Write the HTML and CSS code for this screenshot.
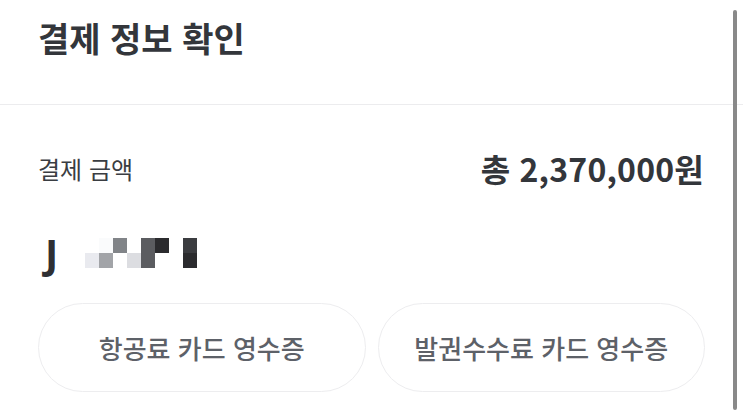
FILE: index.html
```html
<!DOCTYPE html>
<html lang="ko">
<head>
<meta charset="utf-8">
<title>결제 정보 확인</title>
<link rel="stylesheet" href="styles.css">
</head>
<body>
<div class="page">
  <header class="header">
    <h1 class="title">결제 정보 확인</h1>
  </header>
  <section class="content">
    <div class="amount-row">
      <span class="label">결제 금액</span>
      <span class="amount">총 2,370,000원</span>
    </div>
    <div class="name-row">
      <span class="initial">J</span>
      <span class="mosaic">
        <span class="col"><i class="c-w"></i><i class="c-l1"></i></span>
        <span class="col"><i class="c-l0"></i><i class="c-m1"></i></span>
        <span class="col"><i class="c-m2"></i><i class="c-w"></i></span>
        <span class="col"><i class="c-w"></i><i class="c-l2"></i></span>
        <span class="col"><i class="c-d1"></i><i class="c-d1"></i></span>
        <span class="col"><i class="c-d3"></i><i class="c-w"></i></span>
        <span class="col"><i class="c-w"></i><i class="c-w"></i></span>
        <span class="col"><i class="c-d2"></i><i class="c-d3"></i></span>
      </span>
    </div>
    <div class="buttons">
      <button class="receipt-btn">항공료 카드 영수증</button>
      <button class="receipt-btn">발권수수료 카드 영수증</button>
    </div>
  </section>
  <div class="scrollbar"></div>
</div>
</body>
</html>
```
FILE: styles.css
```css
* { box-sizing: border-box; }
html, body {
  margin: 0;
  padding: 0;
  background: #ffffff;
}
body {
  font-family: "Noto Sans CJK KR", "Noto Sans", sans-serif;
  color: #33363b;
  width: 743px;
  height: 414px;
  overflow: hidden;
}
.page {
  position: relative;
  width: 743px;
  height: 414px;
}
.header {
  height: 105px;
  padding: 16px 38px 0;
  border-bottom: 1px solid #ececee;
}
.title {
  margin: 0;
  font-size: 34px;
  line-height: 44px;
  font-weight: 700;
  color: #33363b;
}
.content {
  padding: 0 38px;
  display: flex;
  flex-direction: column;
}
.amount-row {
  margin-top: 43px;
  height: 40px;
  display: flex;
  align-items: center;
  justify-content: space-between;
}
.label {
  font-size: 24px;
  font-weight: 400;
  color: #3a3d42;
}
.amount {
  font-size: 32px;
  font-weight: 700;
  color: #33363b;
  margin-right: 1px;
  letter-spacing: 0.2px;
}
.name-row {
  margin-top: 50px;
  height: 30px;
  display: flex;
  align-items: stretch;
}
.initial {
  font-family: "Noto Sans", sans-serif;
  font-size: 40px;
  line-height: 29px;
  font-weight: 700;
  color: #2e2f33;
  width: 47px;
  padding-left: 7px;
}
.mosaic {
  display: flex;
}
.col {
  display: flex;
  flex-direction: column;
  width: 14px;
}
.col i {
  display: block;
  flex: 1;
}
.c-w { background: #ffffff; }
.c-l0 { background: #fafbfc; }
.c-l1 { background: #e9eaef; }
.c-l2 { background: #dcdde1; }
.c-m1 { background: #a2a4a8; }
.c-m2 { background: #818488; }
.c-d1 { background: #5b5c60; }
.c-d2 { background: #3b3c40; }
.c-d3 { background: #2b2b2e; }
.buttons {
  margin-top: 35px;
  display: grid;
  grid-template-columns: 1fr 1fr;
  gap: 12px;
}
.receipt-btn {
  height: 89px;
  border: 1px solid #ededef;
  border-radius: 45px;
  background: #ffffff;
  font-family: "Noto Sans CJK KR", "Noto Sans", sans-serif;
  font-size: 26px;
  font-weight: 500;
  color: #5d6168;
  padding: 0;
}
.scrollbar {
  position: absolute;
  left: 733px;
  top: 10px;
  width: 4px;
  height: 400px;
  border-radius: 2px;
  background: #898989;
}
```
